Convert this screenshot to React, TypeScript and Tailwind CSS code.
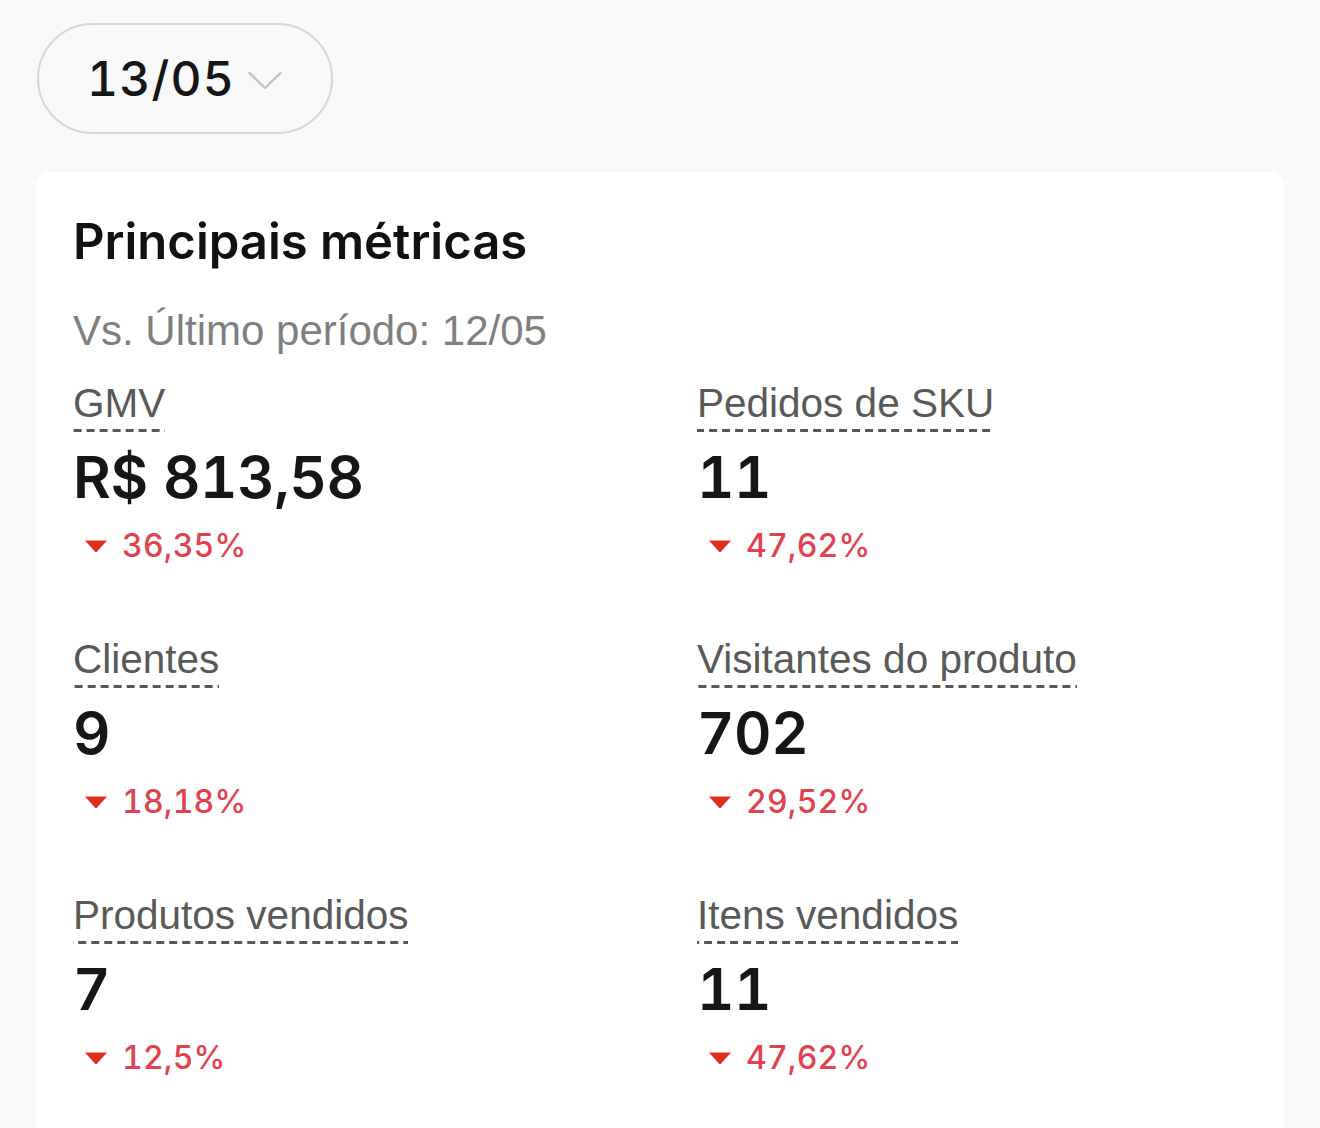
type Metric = {
  label: string;
  value: string;
  change: string;
};

const metrics: Metric[] = [
  { label: "GMV", value: "R$ 813,58", change: "36,35%" },
  { label: "Pedidos de SKU", value: "11", change: "47,62%" },
  { label: "Clientes", value: "9", change: "18,18%" },
  { label: "Visitantes do produto", value: "702", change: "29,52%" },
  { label: "Produtos vendidos", value: "7", change: "12,5%" },
  { label: "Itens vendidos", value: "11", change: "47,62%" },
];

const sans = "font-['Liberation_Sans',Arial,sans-serif]";
const num = "font-['Inter','Liberation_Sans',sans-serif]";

function DownTriangle() {
  return (
    <svg width="24" height="14" viewBox="0 0 24 14" className="shrink-0">
      <path d="M1 1.5 H23 L13.2 12.6 Q12 13.8 10.8 12.6 Z" fill="#e0321f" />
    </svg>
  );
}

function Chevron() {
  return (
    <svg width="34" height="20" viewBox="0 0 34 20" fill="none" className="ml-[13px] mt-[4px]">
      <path d="M1.5 2 L17 17 L32.5 2" stroke="#c2c2c2" strokeWidth="2.4" strokeLinecap="round" strokeLinejoin="round" />
    </svg>
  );
}

function MetricItem({ metric }: { metric: Metric }) {
  return (
    <div className="flex flex-col items-start">
      <span
        className={`${sans} inline-block bg-[linear-gradient(to_right,#575757_62%,transparent_0)] bg-[length:13px_3px] bg-bottom bg-repeat-x pb-[7px] text-[40.5px] leading-[44px] text-[#595959]`}
      >
        {metric.label}
      </span>
      <span className={`${num} mt-[11px] text-[58px] font-semibold leading-[68px] tracking-[-0.4px] tabular-nums text-[#161616]`}>
        {metric.value}
      </span>
      <div className="mt-[15px] flex items-center gap-[14px] pl-[11px]">
        <DownTriangle />
        <span className={`${num} text-[32px] font-medium leading-[40px] tracking-[0.2px] tabular-nums text-[#e0434f]`}>
          {metric.change}
        </span>
      </div>
    </div>
  );
}

export default function App() {
  return (
    <div className="min-h-[1128px] bg-[#f8f8f8] pt-[23px] pl-[36px] pr-[36px]">
      {/* Date picker */}
      <button className="ml-px flex h-[111px] w-[296px] items-center rounded-full border-[2.5px] border-[#d6d6d6] pl-[48px]">
        <span className={`${num} text-[48px] font-medium leading-none tracking-[1.2px] tabular-nums text-[#161616]`}>13/05</span>
        <Chevron />
      </button>

      {/* Card */}
      <div className="mt-[38px] h-[1000px] rounded-[14px] bg-white px-[37px] pt-[40px]">
        <h1 className={`${num} text-[49px] font-semibold leading-[60px] text-[#111]`}>
          Principais métricas
        </h1>
        <p className={`${sans} mt-[37px] text-[42px] leading-[44px] text-[#7f7f7f]`}>
          Vs. Último período: 12/05
        </p>
        <div className="mt-[28px] grid grid-cols-[624px_1fr] gap-y-[71px]">
          {metrics.map((m) => (
            <MetricItem key={m.label} metric={m} />
          ))}
        </div>
      </div>
    </div>
  );
}
